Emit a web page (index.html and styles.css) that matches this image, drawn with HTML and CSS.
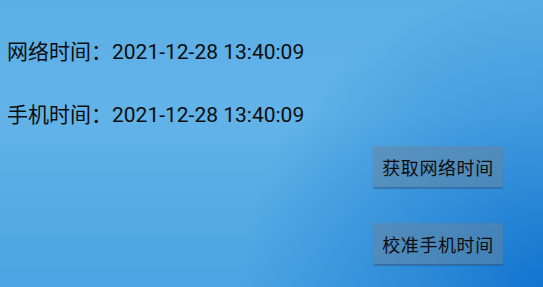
FILE: index.html
```html
<!DOCTYPE html>
<html lang="zh-CN">
<head>
<meta charset="utf-8">
<title>时间校准</title>
<link rel="stylesheet" href="styles.css">
</head>
<body>
<main class="screen">
  <p class="info info-first">网络时间：2021-12-28 13:40:09</p>
  <p class="info info-second">手机时间：2021-12-28 13:40:09</p>
  <div class="actions">
    <button class="btn">获取网络时间</button>
    <button class="btn btn-second">校准手机时间</button>
  </div>
</main>
</body>
</html>
```

FILE: styles.css
```css
html, body {
  margin: 0;
  padding: 0;
  width: 100%;
  height: 100%;
}
body {
  overflow: hidden;
  font-family: Roboto, "Noto Sans CJK SC", sans-serif;
  color: #0d0d0d;
}
.screen {
  box-sizing: border-box;
  width: 543px;
  height: 287px;
  padding: 40px 0 0 7px;
  display: flex;
  flex-direction: column;
  background:
    radial-gradient(circle at 100% 100%, rgba(14, 114, 206, 0.95) 0px, rgba(14, 114, 206, 0.55) 110px, rgba(14, 114, 206, 0) 300px),
    linear-gradient(180deg, #5baee6 0%, #62b3e8 40%, #4ba3e1 100%);
}
.info {
  margin: 0;
  font-size: 21px;
  line-height: 24px;
  height: 24px;
  white-space: nowrap;
}
.info-second {
  margin-top: 39px;
}
.actions {
  margin-top: 19px;
  display: flex;
  flex-direction: column;
  align-items: flex-end;
  padding-right: 40px;
}
.btn {
  box-sizing: border-box;
  width: 130px;
  height: 42px;
  margin: 0;
  padding: 0;
  border: none;
  border-bottom: 1px solid rgba(40, 80, 120, 0.5);
  border-radius: 2px;
  background: rgba(110, 130, 150, 0.45);
  box-shadow: 0 1px 1px rgba(0, 40, 90, 0.25);
  font-family: Roboto, "Noto Sans CJK SC", sans-serif;
  font-size: 18px;
  letter-spacing: 0.6px;
  color: #0d0d0d;
}
.btn-second {
  margin-top: 35px;
}
```
